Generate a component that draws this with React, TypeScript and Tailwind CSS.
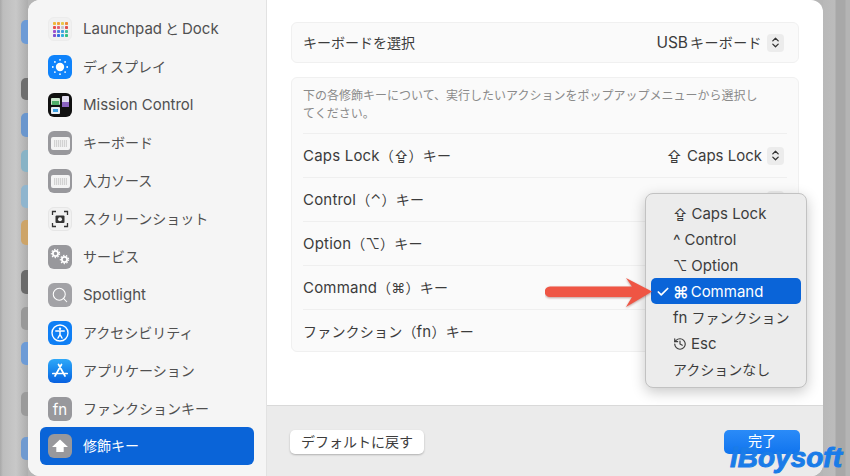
import { Check, ChevronsUpDown, History, Search } from "lucide-react";
import type { ReactNode } from "react";

const font = "font-['Inter','Noto_Sans_CJK_JP','DejaVu_Sans',sans-serif]";

// latin runs sit a bit larger than the kana next to them
function L({ children }: { children: ReactNode }) {
  return <span className="text-[15px]">{children}</span>;
}

function Tile({ className, children }: { className: string; children: ReactNode }) {
  return (
    <div className={`w-6 h-6 rounded-[6px] flex items-center justify-center shrink-0 overflow-hidden ${className}`}>
      {children}
    </div>
  );
}

const dotColors = [
  "#f0b93a", "#f0a03a", "#e8c84a", "#ee8a3a",
  "#e8504a", "#e0607a", "#c8c8d0", "#e05050",
  "#a050d0", "#4a80e0", "#40a0e0", "#40c0a0",
  "#8050d0", "#3070e0", "#30b0e0", "#30c080",
];

function LaunchpadIcon() {
  return (
    <Tile className="bg-[#f1f1f1] border border-[#ececec]">
      <div className="grid grid-cols-4 gap-[1px]">
        {dotColors.map((c, i) => (
          <svg key={i} width="3" height="3" viewBox="0 0 3 3">
            <rect width="3" height="3" rx="0.8" fill={c} />
          </svg>
        ))}
      </div>
    </Tile>
  );
}

function DisplayIcon() {
  return (
    <Tile className="bg-[#0f83fb]">
      <svg width="20" height="20" viewBox="0 0 20 20" fill="white">
        <circle cx="10" cy="10" r="4.2" />
        <circle cx="10" cy="2.8" r="0.9" />
        <circle cx="10" cy="17.2" r="0.9" />
        <circle cx="2.8" cy="10" r="0.9" />
        <circle cx="17.2" cy="10" r="0.9" />
        <circle cx="4.9" cy="4.9" r="0.9" />
        <circle cx="15.1" cy="4.9" r="0.9" />
        <circle cx="4.9" cy="15.1" r="0.9" />
        <circle cx="15.1" cy="15.1" r="0.9" />
      </svg>
    </Tile>
  );
}

function MissionIcon() {
  return (
    <Tile className="bg-[#111111]">
      <svg width="24" height="24" viewBox="0 0 24 24">
        <rect x="3" y="5" width="9" height="7" rx="1" fill="#cfe8d0" />
        <rect x="4" y="8" width="7" height="4" fill="#4fae6a" />
        <rect x="14" y="3" width="7" height="11" rx="1" fill="#e2def0" />
        <rect x="14" y="9" width="7" height="5" fill="#8a62c0" />
        <rect x="3" y="14" width="9" height="7" rx="1" fill="#e8eef5" />
        <rect x="5" y="16" width="5" height="3" fill="#3a9ee0" />
      </svg>
    </Tile>
  );
}

function KeyboardIcon() {
  return (
    <Tile className="bg-[#98989c]">
      <div className="w-[19px] h-[13px] rounded-[2px] bg-[#f4f4f4] flex items-center justify-center">
        <div className="w-[13px] h-[7px] bg-[repeating-linear-gradient(90deg,#d2d2d2_0_1px,#ececec_1px_2px)]" />
      </div>
    </Tile>
  );
}

function ScreenshotIcon() {
  return (
    <Tile className="bg-[#f1f1f1] border border-[#e6e6e6]">
      <svg width="18" height="18" viewBox="0 0 18 18" fill="none" stroke="#333" strokeWidth="1.3">
        <path d="M1.5 5V1.5H5M13 1.5h3.5V5M1.5 13v3.5H5M13 16.5h3.5V13" />
        <rect x="4.5" y="5.5" width="9" height="7.5" rx="1" fill="#333" stroke="none" />
        <circle cx="9" cy="9.2" r="2" fill="#f1f1f1" stroke="none" />
      </svg>
    </Tile>
  );
}

function ServicesIcon() {
  return (
    <Tile className="bg-[#98989c]">
      <svg width="22" height="22" viewBox="0 0 22 22" fill="none" stroke="white">
        <circle cx="6.5" cy="7.5" r="2.6" strokeWidth="1.8" />
        <circle cx="6.5" cy="7.5" r="4.1" strokeWidth="1.2" strokeDasharray="1.4 1.5" />
        <circle cx="15.5" cy="13.5" r="2.6" strokeWidth="1.8" />
        <circle cx="15.5" cy="13.5" r="4.1" strokeWidth="1.2" strokeDasharray="1.4 1.5" />
      </svg>
    </Tile>
  );
}

function AccessibilityIcon() {
  return (
    <Tile className="bg-[#0f7ff5]">
      <svg width="20" height="20" viewBox="0 0 20 20" fill="none" stroke="white">
        <circle cx="10" cy="10" r="8" strokeWidth="1.4" />
        <circle cx="10" cy="5.8" r="1.2" fill="white" stroke="none" />
        <path d="M5.8 8h8.4M10 8v3.5M10 11.5l-2 3.5M10 11.5l2 3.5" strokeWidth="1.5" strokeLinecap="round" />
      </svg>
    </Tile>
  );
}

function AppStoreIcon() {
  return (
    <Tile className="bg-gradient-to-b from-[#2fa8f8] to-[#0a60e0]">
      <svg width="20" height="20" viewBox="0 0 20 20" fill="none" stroke="white" strokeWidth="1.7" strokeLinecap="round">
        <path d="M11.5 3.5L5 15M8.5 3.5L15 15M2.8 12.5h14.4" />
      </svg>
    </Tile>
  );
}

function ModifierIcon() {
  return (
    <Tile className="bg-[#98989c]">
      <svg width="18" height="18" viewBox="0 0 18 18" fill="white">
        <path d="M9 2.5L17 10h-4.3v5H5.3v-5H1z" />
      </svg>
    </Tile>
  );
}

const sidebar = [
  {
    id: "launchpad",
    label: (
      <>
        <L>Launchpad</L>
        <span className="mx-[3px]">と</span>
        <L>Dock</L>
      </>
    ),
    icon: <LaunchpadIcon />,
  },
  { id: "display", label: "ディスプレイ", icon: <DisplayIcon /> },
  { id: "mission", label: <L>Mission Control</L>, icon: <MissionIcon /> },
  { id: "keyboard", label: "キーボード", icon: <KeyboardIcon /> },
  { id: "input", label: "入力ソース", icon: <KeyboardIcon /> },
  { id: "screenshot", label: "スクリーンショット", icon: <ScreenshotIcon /> },
  { id: "services", label: "サービス", icon: <ServicesIcon /> },
  {
    id: "spotlight",
    label: <L>Spotlight</L>,
    icon: (
      <Tile className="bg-[#a2a2a6]">
        <Search size={18} color="white" strokeWidth={1.4} />
      </Tile>
    ),
  },
  { id: "a11y", label: "アクセシビリティ", icon: <AccessibilityIcon /> },
  { id: "apps", label: "アプリケーション", icon: <AppStoreIcon /> },
  {
    id: "fnkeys",
    label: "ファンクションキー",
    icon: (
      <Tile className="bg-[#98989c]">
        <span className="text-white text-[15px] leading-none">fn</span>
      </Tile>
    ),
  },
];

const peeks = [
  "mt-[20px] h-[24px] bg-[#6d9bd6]",
  "mt-[34px] h-[22px] bg-[#6e6e6e]",
  "mt-[13px] h-[24px] bg-[#6a96cd]",
  "mt-[13px] h-[22px] bg-[#88b3c6]",
  "mt-[13px] h-[23px] bg-[#8fb5ce]",
  "mt-[12px] h-[25px] bg-[#cda468]",
  "mt-[25px] h-[24px] bg-[#6a6a6a]",
  "mt-[13px] h-[23px] bg-[#989898]",
  "mt-[12px] h-[23px] bg-[#6d9bd6]",
  "mt-[27px] h-[24px] bg-[#9a9a9a]",
  "mt-[21px] h-[23px] bg-[#6f9ad0]",
];

function Stepper() {
  return (
    <span className="w-[17px] h-[18px] rounded-[4px] bg-[#ececec] flex items-center justify-center">
      <ChevronsUpDown size={13} color="#333" strokeWidth={2.4} />
    </span>
  );
}

const keyRows = [
  { id: "control", label: <><L>Control</L>（⌃）キー</>, stepper: true },
  { id: "option", label: <><L>Option</L>（⌥）キー</> },
  { id: "command", label: <><L>Command</L>（⌘）キー</> },
  { id: "fn", label: <>ファンクション（<L>fn</L>）キー</> },
];

function MenuItem({ children, selected }: { children: ReactNode; selected?: boolean }) {
  return (
    <div
      className={`h-[26px] rounded-[5px] flex items-center pt-[1px] pl-[22px] relative ${
        selected ? "bg-[#0a64d8] text-white" : "text-[#3c3c3c]"
      }`}
    >
      {selected && <Check size={14} strokeWidth={3} className="absolute left-[5px]" />}
      {children}
    </div>
  );
}

export default function App() {
  return (
    <div className={`relative w-[850px] h-[476px] overflow-hidden flex bg-[#b6b6b6] leading-[20px] ${font}`}>
      {/* desktop behind the window */}
      <div className="w-[28px] shrink-0 flex flex-col items-end bg-[linear-gradient(90deg,#a8a8a8_0,#bdbdbd_3px,#c8c8c8_16px,#adadad_28px)]">
        {peeks.map((p) => (
          <div key={p} className={`w-[7px] rounded-l-[5px] ${p}`} />
        ))}
      </div>

      <div className="w-[795px] shrink-0 rounded-[12px] overflow-hidden flex bg-white">
        <aside className="w-[239px] shrink-0 bg-[#f5f5f5] border-r border-[#e2e2e2] pt-[10px] pl-[12px] pr-[12px] text-[14px] text-[#505050]">
          {sidebar.map((item) => (
            <div key={item.id} className="h-[38px] flex items-center gap-[11px] pl-[8px]">
              {item.icon}
              <span>{item.label}</span>
            </div>
          ))}
          <div className="h-[38px] -mt-[1px] rounded-[6px] bg-[#0a64d8] flex items-center gap-[11px] pl-[8px] text-white">
            <ModifierIcon />
            <span>修飾キー</span>
          </div>
        </aside>

        <div className="flex-1 flex flex-col">
          <main className="flex-1 px-[24px] pt-[22px] flex flex-col gap-[14px] text-[14px] text-[#3c3c3c]">
            <section className="h-[41px] rounded-[6px] bg-[#fafafa] border border-[#f0f0f0] px-[11px] pr-[14px] flex items-center justify-between">
              <span>キーボードを選択</span>
              <span className="flex items-center gap-[5px]">
                <span className="flex items-center gap-[2px]">
                  <span className="text-[15.5px]">USB</span>
                  <span className="tracking-[0.4px]">キーボード</span>
                </span>
                <Stepper />
              </span>
            </section>

            <section className="h-[275px] rounded-[6px] bg-[#fafafa] border border-[#f0f0f0] px-[11px]">
              <p className="w-[460px] pt-[9px] pb-[10px] text-[12px] leading-[18px] text-[#8a8a8a]">
                下の各修飾キーについて、実行したいアクションをポップアップメニューから選択してください。
              </p>
              <div className="h-[44px] border-t border-[#efefef] flex items-center justify-between pr-[3px]">
                <span className="tracking-[0.2px]">
                  <L>Caps Lock</L>（⇪）キー
                </span>
                <span className="flex items-center gap-[5px]">
                  <span className="flex items-center gap-[5px]">
                    <span className="text-[15px]">⇪</span>
                    <L>Caps Lock</L>
                  </span>
                  <Stepper />
                </span>
              </div>
              {keyRows.map((row) => (
                <div key={row.id} className="h-[44px] border-t border-[#efefef] flex items-center justify-between pr-[3px]">
                  <span className="tracking-[0.2px]">{row.label}</span>
                  {row.stepper && <Stepper />}
                </div>
              ))}
            </section>
          </main>

          <footer className="h-[71px] shrink-0 bg-[#ebebeb] border-t border-[#d9d9d9] px-[23px] pt-[24px] flex items-start justify-between text-[14px]">
            <button className="h-[24px] w-[134px] rounded-[5px] bg-white shadow-[0_1px_2px_rgba(0,0,0,0.25)] text-[#3c3c3c]">
              デフォルトに戻す
            </button>
            <button className="h-[24px] w-[76px] rounded-[5px] pb-[3px] bg-gradient-to-b from-[#2a8bf8] to-[#0f74ee] text-white">
              完了
            </button>
          </footer>
        </div>
      </div>

      <div className="flex-1 bg-[linear-gradient(90deg,#b8b8b8_0,#bcbcbc_12px,#a8a8a8_13px,#a8a8a8_22px,#b4b4b4_23px)]" />

      {/* popup menu */}
      <div className="absolute left-[645px] top-[193px] w-[162px] h-[195px] rounded-[8px] bg-[#ececec] border border-[#c2c2c2] shadow-[0_4px_14px_rgba(0,0,0,0.22)] px-[5px] pt-[6px] text-[14px]">
        <MenuItem><span className="mr-[4px]">⇪</span><L>Caps Lock</L></MenuItem>
        <MenuItem><span className="mr-[4px] text-[16px]">^</span><L>Control</L></MenuItem>
        <MenuItem><span className="mr-[4px]">⌥</span><L>Option</L></MenuItem>
        <MenuItem selected><span className="mr-[2px] text-[16px] font-semibold">⌘</span><L>Command</L></MenuItem>
        <MenuItem><L>fn</L><span className="ml-[4px]">ファンクション</span></MenuItem>
        <MenuItem>
          <History size={14} strokeWidth={2} className="mr-[4px]" />
          <L>Esc</L>
        </MenuItem>
        <MenuItem>アクションなし</MenuItem>
      </div>

      {/* annotation arrow */}
      <svg className="absolute left-[545px] top-[274px]" width="112" height="36" viewBox="0 0 112 36">
        <path
          d="M5 12.5h82L81 4l26 13.5L81 33l6-10H5a5 5 0 0 1 0-10.5z"
          fill="#ef5544"
          className="drop-shadow-[0_1px_1px_rgba(120,40,30,0.45)]"
        />
      </svg>

      {/* watermark */}
      <span className="absolute left-[730px] top-[441px] font-['Liberation_Sans',sans-serif] text-[28px] leading-[34px] font-bold italic text-[#1a7ce8] [-webkit-text-stroke:1px_#1a7ce8]">
        iBoysoft
      </span>
    </div>
  );
}
